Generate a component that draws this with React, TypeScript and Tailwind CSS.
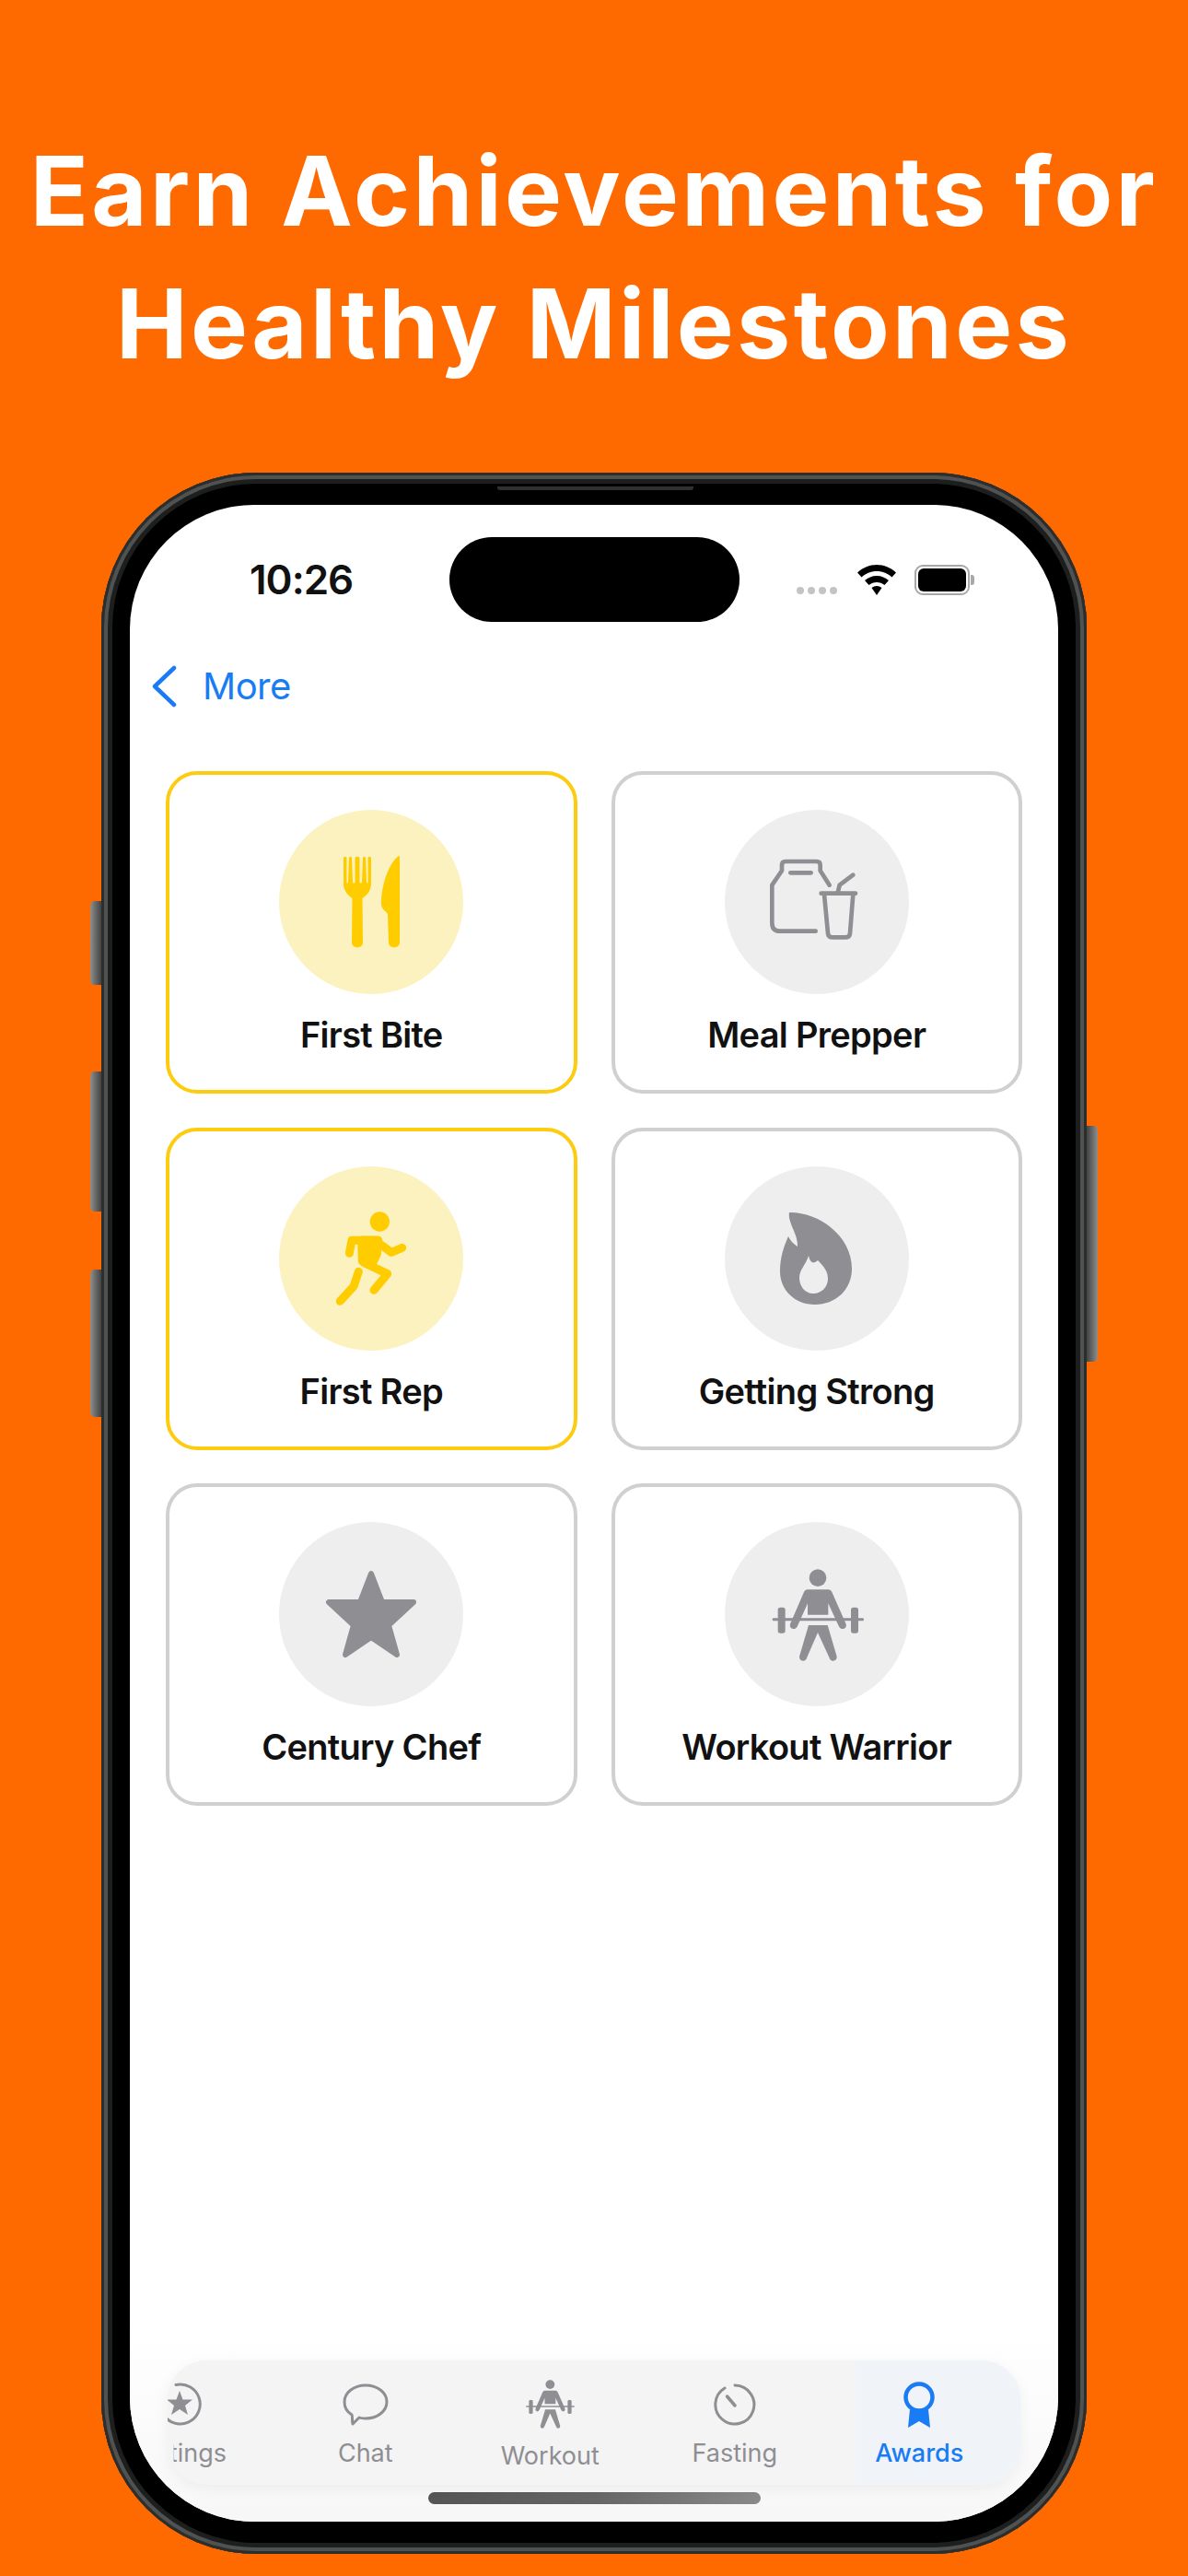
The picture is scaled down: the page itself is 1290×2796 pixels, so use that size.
import type { ReactNode } from 'react'

const YELLOW = '#ffcc00'
const GRAY = '#8e8e93'

function ForkKnifeIcon() {
  return (
    <svg width="61" height="100" viewBox="0 0 61 100" fill={YELLOW}>
      <path d="M0 2C0 .5 3.500 .5 3.500 2V28C3.500 30 5 30 5 28L6 2C6 .5 9 .5 9 2L10 28C10 30 12.500 30 12.500 28V2C12.500 .5 17.500 .5 17.500 2V28C17.500 30 20 30 20 28L21 2C21 .5 24 .5 24 2L25 28C25 30 26.500 30 26.500 28V2C26.500 .5 30 .5 30 2V30C30 38 25 43 20.500 46L21 94C21 101 9 101 9 94L9.500 46C5 43 0 38 0 30Z" />
      <path d="M61 0C52 3 41 28 41 52C41 58 46 60 48 63L49 94C49 101 61 101 61 94Z" />
    </svg>
  )
}

function MealIcon() {
  return (
    <svg width="130" height="120" viewBox="9 0 390 360" fill="none" stroke={GRAY} strokeWidth="14" strokeLinecap="round" strokeLinejoin="round">
      <path d="M200 275H85Q58 275 58 248V125L90 78V60Q90 48 102 48H203Q215 48 215 60V78L245 125" />
      <path d="M118 85H185" />
      <path d="M218 152H330" />
      <path d="M228 155L240 282Q241 295 254 295H298Q311 295 312 282L322 155" />
      <path d="M272 150L278 125L322 92" />
    </svg>
  )
}

function RunnerIcon() {
  return (
    <svg width="110" height="130" viewBox="-6 0 330 390" fill="none" stroke={YELLOW} strokeWidth="27" strokeLinecap="round" strokeLinejoin="round">
      <circle cx="187" cy="75" r="32" fill={YELLOW} stroke="none" />
      <path d="M88 178L96 136H172L225 175L260 160" />
      <path d="M128 135H182L178 180L165 208L130 203Z" fill={YELLOW} />
      <path d="M135 208L212 245L168 298" />
      <path d="M118 238L102 286L58 334" />
    </svg>
  )
}

function FlameIcon() {
  return (
    <svg width="79" height="101" viewBox="0 0 79 101" fill={GRAY}>
      <path
        fillRule="evenodd"
        d="M10 1C40 0 78 25 78 62C78 85 60 101 38 101C16 101 0 85 0 65C0 50 4 38 9 27C11 31 14 35 19 38C20 25 8 12 10 1ZM36 89C27 89 21 81 21 72C21 63 28 58 31 48C33 56 36 57 41 53C48 60 52 65 52 73C52 82 45 89 36 89Z"
      />
    </svg>
  )
}

function StarIcon() {
  return (
    <svg width="100" height="96" viewBox="0 0 100 96" fill={GRAY} stroke={GRAY} strokeWidth="6" strokeLinejoin="round">
      <path d="M50 4L62 35H96L69 60L78 92L50 73L22 92L31 60L4 35H38Z" />
    </svg>
  )
}

function LifterIcon({ size = 130, height = 120, viewBox = '0 0 390 360' }: { size?: number; height?: number; viewBox?: string }) {
  return (
    <svg width={size} height={height} viewBox={viewBox} fill={GRAY}>
      <circle cx="198" cy="62" r="28" />
      <path d="M165 100H232Q240 100 245 110L290 212Q293 225 280 228Q270 228 266 218L232 145V182H165V145L132 218Q128 228 118 228Q105 225 108 212L152 110Q157 100 165 100Z" />
      <rect x="50" y="193" width="298" height="9" rx="4" />
      <rect x="68" y="158" width="24" height="84" rx="8" />
      <rect x="306" y="158" width="24" height="84" rx="8" />
      <path d="M168 216H230L260 318Q260 332 248 332Q238 332 235 320L198 240L163 320Q160 332 150 332Q138 332 138 318Z" />
    </svg>
  )
}

function TabBadgeIcon() {
  return (
    <svg width="50" height="50" viewBox="0 0 50 50" fill="none" stroke={GRAY} strokeWidth="3" strokeLinecap="round">
      <path d="M20 3.500A21.500 21.500 0 1 1 6 35" />
      <path d="M24 10L27.500 19.500H38L30 26L33 36L24 30L15 36L18 26L10 19.500H20.500Z" fill={GRAY} stroke="none" />
    </svg>
  )
}

function TabChatIcon() {
  return (
    <svg width="50" height="46" viewBox="0 0 50 46" fill="none" stroke={GRAY} strokeWidth="3" strokeLinejoin="round">
      <path d="M25 2C38 2 48 10 48 20C48 30 38 38 25 38C22 38 20 38 18 37L11 44C10 40 11 36 10 34C5 31 2 26 2 20C2 10 12 2 25 2Z" />
    </svg>
  )
}

function TabTimerIcon() {
  return (
    <svg width="46" height="46" viewBox="0 0 46 46" fill="none" stroke={GRAY} strokeWidth="3" strokeLinecap="round">
      <path d="M23 2A21 21 0 1 1 12 5" />
      <path d="M23 24L14.500 14" strokeWidth="3.500" />
    </svg>
  )
}

function TabAwardIcon() {
  return (
    <svg width="38" height="50" viewBox="0 0 38 50" fill="none">
      <circle cx="19" cy="17" r="14.500" stroke="#1a7cf5" strokeWidth="4.500" />
      <path d="M9 30L7 50L19 43L31 50L29 30Q19 36 9 30Z" fill="#1a7cf5" />
    </svg>
  )
}

const badges: { label: string; earned: boolean; icon: ReactNode }[] = [
  { label: 'First Bite', earned: true, icon: <ForkKnifeIcon /> },
  { label: 'Meal Prepper', earned: false, icon: <MealIcon /> },
  { label: 'First Rep', earned: true, icon: <RunnerIcon /> },
  { label: 'Getting Strong', earned: false, icon: <FlameIcon /> },
  { label: 'Century Chef', earned: false, icon: <StarIcon /> },
  { label: 'Workout Warrior', earned: false, icon: <LifterIcon /> },
]

const tabs: { label: string; icon: ReactNode; labelClass: string }[] = [
  { label: 'Settings', icon: <TabBadgeIcon />, labelClass: 'mr-[4px] [clip-path:inset(0_0_0_46px)] text-[#8e8e93]' },
  { label: 'Chat', icon: <TabChatIcon />, labelClass: 'text-[#8e8e93]' },
  { label: 'Workout', icon: <LifterIcon size={53} height={53} viewBox="49 33 300 300" />, labelClass: 'pt-[3px] text-[#8e8e93]' },
  { label: 'Fasting', icon: <TabTimerIcon />, labelClass: 'text-[#8e8e93]' },
  { label: 'Awards', icon: <TabAwardIcon />, labelClass: 'font-medium text-[#1a7cf5]' },
]

function BadgeCard({ label, earned, icon }: { label: string; earned: boolean; icon: ReactNode }) {
  return (
    <div
      className={`flex h-[350px] flex-col items-center rounded-[34px] border-[4px] pt-[38px] ${
        earned ? 'border-[#fdcb0f]' : 'border-[#d0d0d0]'
      }`}
    >
      <div className={`flex h-[200px] w-[200px] items-center justify-center rounded-full ${earned ? 'bg-[#fcf2bf]' : 'bg-[#eeeeef]'}`}>{icon}</div>
      <div className="mt-[22px] text-[38px] leading-[44px] font-semibold tracking-[-0.7px] text-[#111]">{label}</div>
    </div>
  )
}

export default function App() {
  return (
    <div className="flex h-[2796px] w-[1290px] flex-col items-center overflow-hidden bg-[#ff6a00] pt-[135px] font-['Inter',sans-serif]">
      <h1 className="text-center font-['Inter',sans-serif] text-[104px] leading-[144px] font-bold tracking-[3.300px] text-white">
        Earn Achievements for
        <br />
        Healthy Milestones
      </h1>

      <div className="relative mt-[90px] h-[2259px] w-[1070px]">
        {/* side buttons */}
        <div className="absolute top-[465px] -left-[12px] h-[91px] w-[16px] rounded-l-[5px] bg-gradient-to-r from-[#8f8f8d] to-[#2b2d2d]" />
        <div className="absolute top-[650px] -left-[12px] h-[152px] w-[16px] rounded-l-[5px] bg-gradient-to-r from-[#8f8f8d] to-[#2b2d2d]" />
        <div className="absolute top-[865px] -left-[12px] h-[160px] w-[16px] rounded-l-[5px] bg-gradient-to-r from-[#8f8f8d] to-[#2b2d2d]" />
        <div className="absolute top-[709px] -right-[12px] h-[256px] w-[16px] rounded-r-[5px] bg-gradient-to-l from-[#8f8f8d] to-[#2b2d2d]" />

        <div className="relative flex h-full flex-col rounded-[168px] bg-black px-[31px] pt-[35px] pb-[35px] shadow-[inset_0_0_0_3px_#2b2e2d,inset_0_0_0_7px_#505251,inset_0_0_0_12px_#1d1f1f]">
          <div className="absolute top-[15px] left-[430px] h-[4px] w-[213px] rounded-b-[3px] bg-[#2f3130]" />
          <div className="flex h-full flex-col overflow-hidden rounded-[135px] bg-white">
            <div className="flex items-center pt-[35px] pl-[130px]">
              <div className="flex h-[92px] w-[217px] items-center text-[44px] font-semibold tracking-[-1px] text-[#111]">10:26</div>
              <div className="h-[92px] w-[315px] rounded-[46px] bg-black" />
              <div className="ml-[62px] flex w-[46px] gap-[4px] pt-[24px]">
                <span className="h-[8px] w-[8px] rounded-full bg-[#c4c4c6]" />
                <span className="h-[8px] w-[8px] rounded-full bg-[#c4c4c6]" />
                <span className="h-[8px] w-[8px] rounded-full bg-[#c4c4c6]" />
                <span className="h-[8px] w-[8px] rounded-full bg-[#c4c4c6]" />
              </div>
              <svg className="ml-[20px]" width="42" height="33" viewBox="0 0 42 33" fill="#000">
                <path d="M21 0C29 0 36 3 42 8.500L37.500 13.500C33 9.500 27.500 7 21 7C14.500 7 9 9.500 4.500 13.500L0 8.500C6 3 13 0 21 0Z" />
                <path d="M21 12C26 12 30.500 14 34 17L29.500 22C27 20 24 19 21 19C18 19 15 20 12.500 22L8 17C11.500 14 16 12 21 12Z" />
                <path d="M21 23C23 23 25 23.700 26.500 25L21 33L15.500 25C17 23.700 19 23 21 23Z" />
              </svg>
              <div className="ml-[20px] flex items-center">
                <div className="flex h-[33px] w-[60px] items-center justify-center rounded-[9px] border-[2px] border-[#a8a8aa]">
                  <div className="h-[25px] w-[52px] rounded-[6px] bg-black" />
                </div>
                <div className="ml-[1px] h-[11px] w-[4px] rounded-r-[3px] bg-[#a8a8aa]" />
              </div>
            </div>

            <div className="mt-[47px] flex h-[46px] items-center pl-[24px] text-[#1a7cf5]">
              <svg width="27" height="46" viewBox="0 0 27 46" fill="none" stroke="#1a7cf5" strokeWidth="4.500" strokeLinecap="round" strokeLinejoin="round">
                <path d="M24 3L3 23L24 43" />
              </svg>
              <span className="ml-[28px] text-[40px] tracking-[-0.5px]">More</span>
            </div>

            <div className="mt-[69px] grid grid-cols-2 gap-x-[37px] gap-y-[36.500px] px-[39px]">
              {badges.map((badge) => (
                <BadgeCard key={badge.label} {...badge} />
              ))}
            </div>

            <div className="mt-auto bg-gradient-to-b from-white to-[#f7f7f8] pt-[40px]">
              <div className="relative mx-[41px] h-[135px] overflow-hidden rounded-[42px] bg-[#f4f4f5] shadow-[0_4px_16px_rgba(0,0,0,0.05)]">
                <div className="absolute top-0 right-0 bottom-0 w-[179px] bg-[#f0f4f8]" />
                <div className="relative -ml-[86px] flex">
                  {tabs.map((tab) => (
                    <div key={tab.label} className="flex w-[200.500px] shrink-0 flex-col items-center pt-[21px]">
                      <div className="flex h-[53px] items-center justify-center">{tab.icon}</div>
                      <div className={`mt-[9px] text-[27px] leading-[36px] ${tab.labelClass}`}>{tab.label}</div>
                    </div>
                  ))}
                </div>
              </div>
              <div className="mx-auto mt-[8px] mb-[19px] h-[13px] w-[361px] rounded-full bg-gradient-to-r from-[#555] via-[#666] to-[#8a8a8a]" />
            </div>
          </div>
        </div>
      </div>
    </div>
  )
}
